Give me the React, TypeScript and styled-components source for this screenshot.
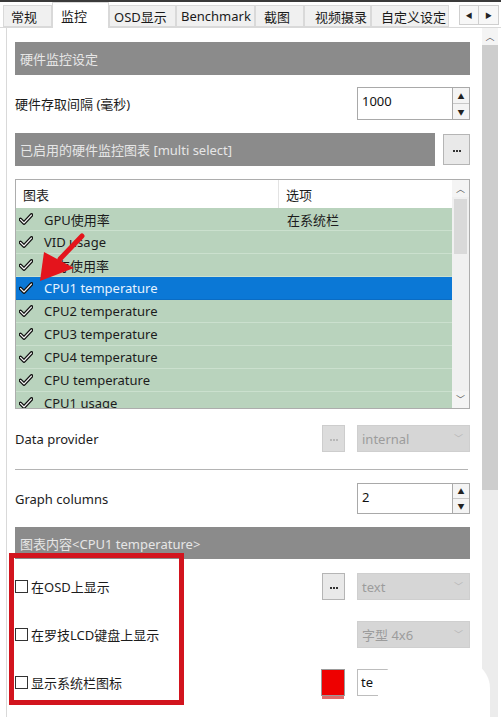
import React from 'react'
import styled, { createGlobalStyle } from 'styled-components'

const GlobalStyle = createGlobalStyle`
  html, body {
    margin: 0;
    padding: 0;
    background: #ffffff;
  }
  * {
    box-sizing: border-box;
  }
`

const FONT = `'Noto Sans', 'Noto Sans CJK SC', sans-serif`

// 整个窗口
const Window = styled.div`
  position: relative;
  width: 501px;
  height: 717px;
  overflow: hidden;
  display: flex;
  flex-direction: column;
  background: #ffffff;
  font-family: ${FONT};
  font-size: 13px;
  color: #1c1c1c;
`

// 选项卡条
const TabStrip = styled.div`
  height: 28px;
  flex: none;
  display: flex;
  align-items: flex-end;
  padding-left: 3px;
  border-top: 2px solid #3a3a3a;
  border-bottom: 1px solid #d9d9d9;
  background: #ffffff;
`

const Tab = styled.div<{ $w: number; $pl: number; $active?: boolean }>`
  width: ${({ $w }) => $w}px;
  height: ${({ $active }) => ($active ? 26 : 22)}px;
  margin-bottom: ${({ $active }) => ($active ? -1 : 0)}px;
  display: flex;
  align-items: center;
  padding-left: ${({ $pl }) => $pl}px;
  background: ${({ $active }) => ($active ? '#ffffff' : '#f0f0f0')};
  border: 1px solid #d9d9d9;
  border-bottom: ${({ $active }) => ($active ? 'none' : '1px solid #d9d9d9')};
  color: #1a1a1a;
  font-size: 13px;
  white-space: nowrap;
`

const TabArrows = styled.div`
  margin-left: auto;
  margin-right: 2px;
  align-self: center;
  display: flex;
`

const TabArrow = styled.div`
  width: 20px;
  height: 20px;
  display: flex;
  align-items: center;
  justify-content: center;
  background: #f7f7f7;
  border: 1px solid #cfcfcf;
  font-size: 7px;
  color: #222;
  & + & {
    border-left: none;
  }
`

// 主体
const Main = styled.div`
  flex: 1;
  display: flex;
  min-height: 0;
`

const Panel = styled.div`
  flex: 1;
  margin-left: 6px;
  border-left: 1px solid #d9d9d9;
  padding: 14px 12px 0 8px;
  display: flex;
  flex-direction: column;
`

const PageScroll = styled.div`
  width: 16px;
  margin-right: 3px;
  display: flex;
  flex-direction: column;
  background: #ececec;
`

const ScrollArrow = styled.div`
  height: 17px;
  display: flex;
  align-items: center;
  justify-content: center;
  font-size: 9px;
  color: #555;
  background: #f4f4f4;
`

const PageThumb = styled.div`
  height: 445px;
  background: #cdcdcd;
`

// 灰色标题栏
const SectionHeader = styled.div<{ $h?: number }>`
  flex: 1;
  height: ${({ $h }) => $h ?? 33}px;
  display: flex;
  align-items: center;
  padding-left: 5px;
  background: #8b8b8b;
  color: #e6e6e6;
  font-size: 13px;
`

const HeaderRow = styled.div<{ $mt: number }>`
  display: flex;
  align-items: center;
  gap: 8px;
  margin-top: ${({ $mt }) => $mt}px;
`

const FieldRow = styled.div<{ $mt: number; $h: number }>`
  display: flex;
  align-items: center;
  justify-content: space-between;
  height: ${({ $h }) => $h}px;
  margin-top: ${({ $mt }) => $mt}px;
`

const Label = styled.span`
  font-size: 13px;
  color: #1c1c1c;
`

const Controls = styled.div`
  display: flex;
  align-items: center;
  gap: 12px;
`

// 数字输入框
const SpinBox = styled.div<{ $h: number }>`
  width: 113px;
  height: ${({ $h }) => $h}px;
  display: flex;
`

const SpinInput = styled.div`
  flex: 1;
  border: 1px solid #a9a9a9;
  padding: 4px 4px 0;
  font-size: 13px;
  color: #111;
  line-height: 18px;
`

const SpinButtons = styled.div`
  width: 17px;
  display: flex;
  flex-direction: column;
  border: 1px solid #a9a9a9;
  border-left: none;
`

const SpinBtn = styled.div`
  flex: 1;
  display: flex;
  align-items: center;
  justify-content: center;
  background: #f4f4f4;
  font-size: 7px;
  color: #222;
  & + & {
    border-top: 1px solid #c8c8c8;
  }
`

const DotsButton = styled.div<{ $w: number; $h: number; $disabled?: boolean }>`
  width: ${({ $w }) => $w}px;
  height: ${({ $h }) => $h}px;
  display: flex;
  align-items: center;
  justify-content: center;
  gap: 1px;
  padding-top: 3px;
  background: ${({ $disabled }) => ($disabled ? '#dcdcdc' : '#e9e9e9')};
  border: 1px solid ${({ $disabled }) => ($disabled ? '#cdcdcd' : '#b5b5b5')};
`

const Dot = styled.span<{ $disabled?: boolean }>`
  width: 2px;
  height: 2px;
  background: ${({ $disabled }) => ($disabled ? '#b8b8b8' : '#333')};
`

const Select = styled.div`
  width: 113px;
  height: 27px;
  display: flex;
  align-items: center;
  justify-content: space-between;
  padding: 0 6px 0 4px;
  background: #d6d6d6;
  border: 1px solid #cfcfcf;
  color: #9c9c9c;
  font-size: 13px;
`

const Chevron = styled.span`
  font-size: 9px;
  color: #b5b5b5;
`

// 列表
const ListBox = styled.div`
  height: 230px;
  margin-top: 13px;
  border: 1px solid #adadad;
  display: flex;
  overflow: hidden;
`

const ListBody = styled.div`
  flex: 1;
  display: flex;
  flex-direction: column;
  overflow: hidden;
`

const ListHead = styled.div`
  height: 28px;
  flex: none;
  display: grid;
  grid-template-columns: 262px 1fr;
  background: #ffffff;
  font-size: 13px;
`

const HeadCell = styled.div<{ $divider?: boolean }>`
  display: flex;
  align-items: center;
  padding-left: 7px;
  border-left: ${({ $divider }) => ($divider ? '1px solid #e3e3e3' : 'none')};
`

const ListRow = styled.div<{ $selected?: boolean }>`
  height: 23px;
  flex: none;
  display: grid;
  grid-template-columns: 28px 234px 1fr;
  align-items: center;
  background: ${({ $selected }) => ($selected ? '#0b78d6' : '#b9d3bd')};
  color: ${({ $selected }) => ($selected ? '#e6f3ff' : '#1c1c1c')};
  border-bottom: 1px solid ${({ $selected }) => ($selected ? '#0a6cc4' : '#cbe0ce')};
  font-size: 13px;
`

const CheckCell = styled.div`
  display: flex;
  align-items: center;
  padding-left: 3px;
`

const OptionCell = styled.div`
  padding-left: 9px;
`

const ListScroll = styled.div`
  width: 17px;
  display: flex;
  flex-direction: column;
  background: #f0f0f0;
`

const ListThumb = styled.div`
  height: 55px;
  margin: 2px 2px 0;
  background: #d9d9d9;
`

const Spacer = styled.div`
  flex: 1;
`

const Divider = styled.div`
  height: 1px;
  margin-top: 17px;
  margin-right: 2px;
  background: #b4b4b4;
`

// 复选框
const CheckLabel = styled.label`
  display: flex;
  align-items: center;
  gap: 3px;
  font-size: 13px;
  color: #1c1c1c;
`

const Box = styled.span`
  width: 13px;
  height: 13px;
  border: 1px solid #333;
  background: #fff;
`

const ColorSwatch = styled.div`
  width: 24px;
  height: 27px;
  background: #ee0000;
  border: 1px solid #9a9a9a;
  box-shadow: 0 4px 0 -1px #e06a6a;
`

const TextInput = styled.div`
  width: 113px;
  height: 27px;
  border: 1px solid #bdbdbd;
  padding: 3px 3px;
  font-size: 13px;
  color: #111;
  background: #fff;
`

// 覆盖层：标注
const RedFrame = styled.div`
  position: absolute;
  left: 9px;
  top: 553px;
  width: 175px;
  height: 152px;
  border: 5px solid #d2141e;
  pointer-events: none;
`

const ArrowOverlay = styled.svg`
  position: absolute;
  left: 30px;
  top: 228px;
  pointer-events: none;
`

const Blob = styled.div`
  position: absolute;
  left: 378px;
  top: 652px;
  width: 112px;
  height: 80px;
  border-radius: 50% 45% 20% 30%;
  background: #ffffff;
  pointer-events: none;
`

const Check = () => (
  <svg width="14" height="12" viewBox="0 0 14 12">
    <path d="M1.5 6.5 L5 10 L12.5 2" fill="none" stroke="#111" strokeWidth="3.8" strokeLinecap="round" strokeLinejoin="round" />
    <path d="M1.5 6.5 L5 10 L12.5 2" fill="none" stroke="#f4f4f4" strokeWidth="1.1" strokeLinecap="round" strokeLinejoin="round" />
  </svg>
)

const Dots = ({ disabled }: { disabled?: boolean }) => (
  <>
    <Dot $disabled={disabled} />
    <Dot $disabled={disabled} />
    <Dot $disabled={disabled} />
  </>
)

const tabs = [
  { label: '常规', w: 49, pl: 7 },
  { label: '监控', w: 57, pl: 8, active: true },
  { label: 'OSD显示', w: 67, pl: 4 },
  { label: 'Benchmark', w: 79, pl: 4 },
  { label: '截图', w: 49, pl: 8 },
  { label: '视频摄录', w: 67, pl: 10 },
  { label: '自定义设定', w: 78, pl: 9 },
]

const rows = [
  { name: 'GPU使用率', option: '在系统栏' },
  { name: 'VID usage' },
  { name: '内存使用率' },
  { name: 'CPU1 temperature', selected: true },
  { name: 'CPU2 temperature' },
  { name: 'CPU3 temperature' },
  { name: 'CPU4 temperature' },
  { name: 'CPU temperature' },
  { name: 'CPU1 usage' },
]

export default function App() {
  return (
    <>
      <GlobalStyle />
      <Window>
        <TabStrip>
          {tabs.map((t) => (
            <Tab key={t.label} $w={t.w} $pl={t.pl} $active={t.active}>
              {t.label}
            </Tab>
          ))}
          <TabArrows>
            <TabArrow>◀</TabArrow>
            <TabArrow>▶</TabArrow>
          </TabArrows>
        </TabStrip>

        <Main>
          <Panel>
            <HeaderRow $mt={0}>
              <SectionHeader>硬件监控设定</SectionHeader>
            </HeaderRow>

            <FieldRow $mt={12} $h={33}>
              <Label>硬件存取间隔 (毫秒)</Label>
              <SpinBox $h={33}>
                <SpinInput>1000</SpinInput>
                <SpinButtons>
                  <SpinBtn>▲</SpinBtn>
                  <SpinBtn>▼</SpinBtn>
                </SpinButtons>
              </SpinBox>
            </FieldRow>

            <HeaderRow $mt={13}>
              <SectionHeader>已启用的硬件监控图表 [multi select]</SectionHeader>
              <DotsButton $w={27} $h={31}>
                <Dots />
              </DotsButton>
            </HeaderRow>

            <ListBox>
              <ListBody>
                <ListHead>
                  <HeadCell>图表</HeadCell>
                  <HeadCell $divider>选项</HeadCell>
                </ListHead>
                {rows.map((r) => (
                  <ListRow key={r.name} $selected={r.selected}>
                    <CheckCell>
                      <Check />
                    </CheckCell>
                    <span>{r.name}</span>
                    <OptionCell>{r.option ?? ''}</OptionCell>
                  </ListRow>
                ))}
              </ListBody>
              <ListScroll>
                <ScrollArrow>︿</ScrollArrow>
                <ListThumb />
                <Spacer />
                <ScrollArrow>﹀</ScrollArrow>
              </ListScroll>
            </ListBox>

            <FieldRow $mt={16} $h={27}>
              <Label>Data provider</Label>
              <Controls>
                <DotsButton $w={23} $h={27} $disabled>
                  <Dots disabled />
                </DotsButton>
                <Select>
                  <span>internal</span>
                  <Chevron>﹀</Chevron>
                </Select>
              </Controls>
            </FieldRow>

            <Divider />

            <FieldRow $mt={13} $h={31}>
              <Label>Graph columns</Label>
              <SpinBox $h={31}>
                <SpinInput>2</SpinInput>
                <SpinButtons>
                  <SpinBtn>▲</SpinBtn>
                  <SpinBtn>▼</SpinBtn>
                </SpinButtons>
              </SpinBox>
            </FieldRow>

            <HeaderRow $mt={13}>
              <SectionHeader $h={32}>图表内容&lt;CPU1 temperature&gt;</SectionHeader>
            </HeaderRow>

            <FieldRow $mt={14} $h={27}>
              <CheckLabel>
                <Box />
                在OSD上显示
              </CheckLabel>
              <Controls>
                <DotsButton $w={23} $h={27}>
                  <Dots />
                </DotsButton>
                <Select>
                  <span>text</span>
                  <Chevron>﹀</Chevron>
                </Select>
              </Controls>
            </FieldRow>

            <FieldRow $mt={21} $h={27}>
              <CheckLabel>
                <Box />
                在罗技LCD键盘上显示
              </CheckLabel>
              <Select>
                <span>字型 4x6</span>
                <Chevron>﹀</Chevron>
              </Select>
            </FieldRow>

            <FieldRow $mt={21} $h={27}>
              <CheckLabel>
                <Box />
                显示系统栏图标
              </CheckLabel>
              <Controls>
                <ColorSwatch />
                <TextInput>te</TextInput>
              </Controls>
            </FieldRow>
          </Panel>

          <PageScroll>
            <ScrollArrow>︿</ScrollArrow>
            <PageThumb />
          </PageScroll>
        </Main>

        <RedFrame />
        <ArrowOverlay width="60" height="60" viewBox="0 0 60 60">
          <line x1="52" y1="8" x2="30" y2="31" stroke="#e4141c" strokeWidth="5" strokeLinecap="round" />
          <polygon points="10,53 14,24 44,40" fill="#e4141c" />
        </ArrowOverlay>
        <Blob />
      </Window>
    </>
  )
}
